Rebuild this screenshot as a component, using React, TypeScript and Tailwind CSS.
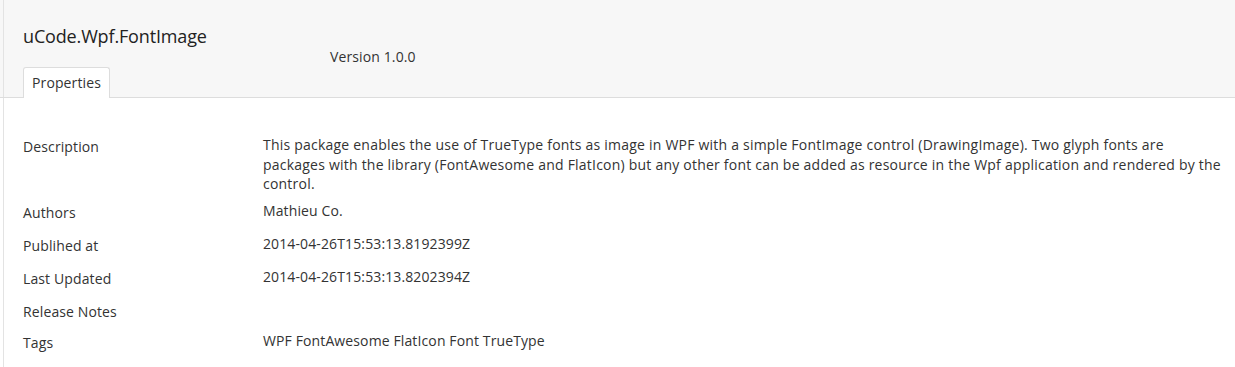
const rows: { label: string; value: string; h: string }[] = [
  {
    label: 'Description',
    value:
      'This package enables the use of TrueType fonts as image in WPF with a simple FontImage control (DrawingImage). Two glyph fonts are packages with the library (FontAwesome and FlatIcon) but any other font can be added as resource in the Wpf application and rendered by the control.',
    h: 'h-[66px]',
  },
  { label: 'Authors', value: 'Mathieu Co.', h: 'h-[33px]' },
  { label: 'Publihed at', value: '2014-04-26T15:53:13.8192399Z', h: 'h-[33px]' },
  { label: 'Last Updated', value: '2014-04-26T15:53:13.8202394Z', h: 'h-[33px]' },
  { label: 'Release Notes', value: '', h: 'h-[31px]' },
  { label: 'Tags', value: 'WPF FontAwesome FlatIcon Font TrueType', h: 'h-[33px]' },
];

export default function App() {
  return (
    <div className="w-[1235px] h-[367px] overflow-hidden bg-white text-[#333] font-['Open_Sans',sans-serif]">
      <div className="bg-[#f7f7f7] border-b border-[#dddddd]">
        <div className="ml-[3px] border-l border-[#e3e3e3] pl-[19px] h-[97px] flex flex-col">
          <div className="mt-[24px] text-[18px] leading-[24px] tracking-[-0.15px] text-[#222]">uCode.Wpf.FontImage</div>
          <div className="ml-[307px] mt-[2px] text-[14px] leading-[14px] tracking-[0.12px]">Version 1.0.0</div>
          <div className="mt-[3px] flex">
            <div className="relative -mb-px h-[31px] w-[87px] bg-white border border-b-0 border-[#dddddd] rounded-t-[3px] pl-[8px] pt-[5px] text-[14px] leading-[20px] tracking-[0.12px]">
              Properties
            </div>
          </div>
        </div>
      </div>
      <div className="ml-[3px] border-l border-[#e3e3e3] h-[269px] pt-[37px] pl-[19px] pr-[11px] tracking-[0.12px]">
        {rows.map((r, i) => (
          <div key={r.label} className={`flex ${r.h}`}>
            <div className="w-[240px] shrink-0 pt-[2px] text-[14px] leading-[19.5px]">{r.label}</div>
            <div className={`flex-1 text-[14px] leading-[19.5px] ${i === 0 ? 'tracking-[0.22px]' : ''}`}>{r.value}</div>
          </div>
        ))}
      </div>
    </div>
  );
}
